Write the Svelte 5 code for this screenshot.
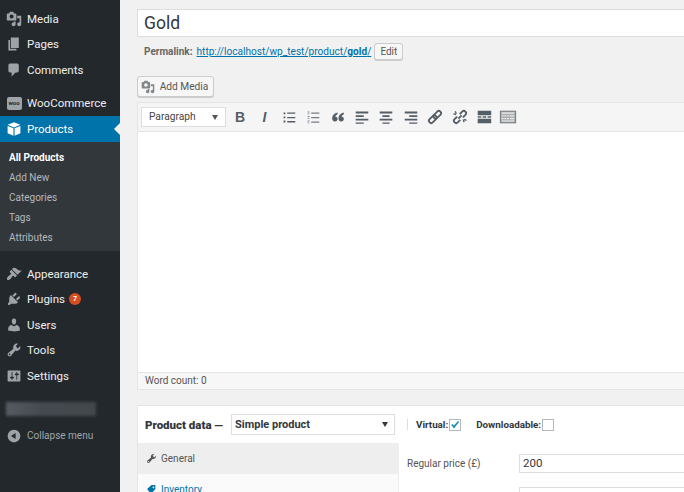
<script>
  const icons = {
    media: 'M13 11V4c0-.55-.45-1-1-1h-1.67L9 1H5L3.67 3H2c-.55 0-1 .45-1 1v7c0 .55.45 1 1 1h10c.55 0 1-.45 1-1zM7 4.5c1.38 0 2.5 1.12 2.5 2.5S8.38 9.5 7 9.5 4.5 8.38 4.5 7 5.62 4.5 7 4.5zM14 6h5v10.5c0 1.38-1.12 2.5-2.5 2.5S14 17.88 14 16.5s1.12-2.5 2.5-2.5c.17 0 .34.02.5.05V9h-3V6zm-4 8.05V13h2v3.5c0 1.38-1.12 2.5-2.5 2.5S7 17.88 7 16.5 8.12 14 9.5 14c.17 0 .34.02.5.05z',
    pages: 'M6 15V2h10v13H6zm-1 1h8v2H3V5h2v11z',
    comments: 'M5 2h9c1.1 0 2 .9 2 2v7c0 1.1-.9 2-2 2h-2l-5 5v-5H5c-1.1 0-2-.9-2-2V4c0-1.1.9-2 2-2z',
    appearance: 'M14.48 11.06L7.41 3.99l1.5-1.5c.5-.56 2.3-.47 3.51.32 1.21.8 1.43 1.28 2.91 2.1 1.18.64 2.45 1.26 4.45.85zm-.71.71L6.7 4.7 4.93 6.47c-.39.39-.39 1.02 0 1.41l1.06 1.06c.39.39.39 1.03 0 1.42-.6.6-1.43 1.11-2.21 1.69-.35.26-.7.53-1.01.84-1.34 1.34-2.05 3.47-1.27 4.25.78.78 2.91.07 4.25-1.27.31-.31.58-.66.84-1.01.58-.78 1.09-1.61 1.69-2.21.39-.39 1.03-.39 1.42 0l1.06 1.06c.39.39 1.02.39 1.41 0z',
    plugins: 'M13.11 4.36L9.87 7.6 8 5.73l3.24-3.24c.35-.34 1.05-.2 1.56.32.52.51.66 1.21.31 1.55zm-8 1.77l.91-1.12 9.01 9.01-1.19.84c-.71.71-2.63 1.16-3.82 1.16H6.14L4.9 17.26c-.59.59-1.54.59-2.12 0-.59-.58-.59-1.53 0-2.12l1.24-1.24v-3.88c0-1.13.4-3.19 1.09-3.89zm7.26 3.97l3.24-3.24c.34-.35 1.04-.21 1.55.31.52.51.66 1.21.31 1.55l-3.24 3.25z',
    users: 'M10 9.25c-2.27 0-2.73-3.44-2.73-3.44C7 4.02 7.82 2 9.97 2c2.16 0 2.98 2.02 2.71 3.81 0 0-.41 3.44-2.68 3.44zm0 2.57L12.72 10c2.39 0 4.52 2.33 4.52 4.53v2.49s-3.65 1.13-7.24 1.13c-3.65 0-7.24-1.13-7.24-1.13v-2.49c0-2.25 1.94-4.48 4.47-4.48z',
    tools: 'M16.68 9.77c-1.34 1.34-3.3 1.67-4.95.99l-5.41 6.52c-.99.99-2.59.99-3.58 0s-.99-2.59 0-3.57l6.52-5.42c-.68-1.65-.35-3.61.99-4.95 1.28-1.28 3.12-1.62 4.72-1.06l-2.89 2.89 2.82 2.82 2.86-2.87c.53 1.58.18 3.39-1.08 4.65zM3.81 16.21c.4.39 1.04.39 1.43 0 .4-.4.4-1.04 0-1.43-.39-.4-1.03-.4-1.43 0-.39.39-.39 1.03 0 1.43z',
    settings: 'M18 16V4c0-.55-.45-1-1-1H3c-.55 0-1 .45-1 1v12c0 .55.45 1 1 1h14c.55 0 1-.45 1-1zM8 11h1c.55 0 1 .45 1 1s-.45 1-1 1H8v1.5c0 .28-.22.5-.5.5s-.5-.22-.5-.5V13H6c-.55 0-1-.45-1-1s.45-1 1-1h1V5.5c0-.28.22-.5.5-.5s.5.22.5.5V11zm5-2h-1c-.55 0-1-.45-1-1s.45-1 1-1h1V5.5c0-.28.22-.5.5-.5s.5.22.5.5V7h1c.55 0 1 .45 1 1s-.45 1-1 1h-1v5.5c0 .28-.22.5-.5.5s-.5-.22-.5-.5V9z',
    products: 'M10 1.5l8 3.2-8 3.3-8-3.3zM2 6.2l7.3 3v9.3L2 15.2zM18 6.2v9l-7.3 3.3V9.2z',
    collapse: 'M10 2.16c4.33 0 7.84 3.51 7.84 7.84s-3.51 7.84-7.84 7.84S2.16 14.33 2.16 10 5.71 2.16 10 2.16zm2 11.72V6.12L6.18 9.97z'
  };

  const topItems = [
    { label: 'Media', icon: 'media' },
    { label: 'Pages', icon: 'pages' },
    { label: 'Comments', icon: 'comments' }
  ];
  const subItems = ['All Products', 'Add New', 'Categories', 'Tags', 'Attributes'];
  const lowerItems = [
    { label: 'Appearance', icon: 'appearance' },
    { label: 'Plugins', icon: 'plugins', badge: 7 },
    { label: 'Users', icon: 'users' },
    { label: 'Tools', icon: 'tools' },
    { label: 'Settings', icon: 'settings' }
  ];
</script>

<div class="page">
  <nav class="sidebar">
    {#each topItems as item}
      <div class="item">
        <svg class="icon" viewBox="0 0 20 20"><path d={icons[item.icon]} /></svg>
        <span>{item.label}</span>
      </div>
    {/each}
    <div class="item woo-item">
      <span class="woo-icon">woo</span>
      <span>WooCommerce</span>
    </div>
    <div class="item current">
      <svg class="icon" viewBox="0 0 20 20"><path d={icons.products} /></svg>
      <span>Products</span>
    </div>
    <div class="submenu">
      {#each subItems as sub, i}
        <div class="sub" class:active={i === 0}>{sub}</div>
      {/each}
    </div>
    {#each lowerItems as item}
      <div class="item">
        <svg class="icon" viewBox="0 0 20 20"><path d={icons[item.icon]} /></svg>
        <span>{item.label}</span>
        {#if item.badge}<span class="badge">{item.badge}</span>{/if}
      </div>
    {/each}
    <div class="blurred"></div>
    <div class="collapse">
      <svg class="icon" viewBox="0 0 20 20"><path d={icons.collapse} /></svg>
      <span>Collapse menu</span>
    </div>
  </nav>

  <main class="content">
    <div class="title">Gold</div>
    <div class="permalink">
      <strong>Permalink:</strong>
      <a href="#top">http://localhost/wp_test/product/<b>gold</b>/</a>
      <span class="btn edit">Edit</span>
    </div>

    <span class="btn add-media">
      <svg viewBox="0 0 20 20"><path d={icons.media} /></svg>
      Add Media
    </span>

    <section class="editor">
      <div class="toolbar">
        <div class="format">Paragraph<i class="caret"></i></div>
        <div class="tools">
          <span class="tool glyph">B</span>
          <span class="tool glyph italic">I</span>
          <svg class="tool" viewBox="0 0 20 20"><path d="M4 5h2v2H4zM8 5h9v1.5H8zM4 9.5h2v2H4zM8 10h9v1.5H8zM4 14h2v2H4zM8 14.5h9V16H8z" /></svg>
          <svg class="tool light" viewBox="0 0 20 20"><path d="M4 4h2v1H4zM4 6h2v1H4zM4 9h2v1H4zM4 11h2v1H4zM4 14h2v1H4zM4 16h2v1H4zM8 5h9v1.5H8zM8 10h9v1.5H8zM8 15h9v1.5H8z" /></svg>
          <svg class="tool" viewBox="0 0 20 20"><path d="M9.5 5C6 6 3.5 8 3.5 11.500c0 2 1.200 3.500 3 3.500s3-1.200 3-2.800-1.200-2.700-2.700-2.700c.4-1 1.500-2 2.700-2.600zM16.500 5c-3.500 1-6 3-6 6.500 0 2 1.200 3.500 3 3.500s3-1.200 3-2.800-1.200-2.700-2.700-2.700c.4-1 1.500-2 2.700-2.600z" /></svg>
          <svg class="tool" viewBox="0 0 20 20"><path d="M3 4h14v2H3zM3 8h9v2H3zM3 12h14v2H3zM3 16h9v1.500H3z" /></svg>
          <svg class="tool" viewBox="0 0 20 20"><path d="M3 4h14v2H3zM6 8h8v2H6zM3 12h14v2H3zM6 16h8v1.500H6z" /></svg>
          <svg class="tool" viewBox="0 0 20 20"><path d="M3 4h14v2H3zM8 8h9v2H8zM3 12h14v2H3zM8 16h9v1.500H8z" /></svg>
          <svg class="tool" viewBox="0 0 20 20">
            <g class="chain" transform="rotate(-45 10 10)">
              <rect x="1.500" y="7.500" width="10" height="5" rx="2.500" />
              <rect x="8.500" y="7.500" width="10" height="5" rx="2.500" />
            </g>
          </svg>
          <svg class="tool" viewBox="0 0 20 20">
            <g class="chain" transform="rotate(-45 10 10)">
              <path d="M8 7.500H4a2.500 2.500 0 0 0 0 5h4M12 7.500h4a2.500 2.500 0 0 1 0 5h-4M7.500 10h5" />
            </g>
            <path d="M4 4l1.400-.8 1.200 2.800-1.400.7zM2.500 7l.5-1.400 2.800 1-.5 1.400zM14 16l1.400-.8-1.200-2.800-1.400.7zM17.500 13l-.5 1.400-2.800-1 .5-1.400z" />
          </svg>
          <svg class="tool" viewBox="0 0 20 20"><path d="M3 3h15v5H3zM3 9.300h4v1.400H3zM8.500 9.300h4v1.400h-4zM14 9.300h4v1.400h-4zM3 12h15v5H3z" /></svg>
          <svg class="tool" viewBox="0 0 20 20"><rect x="1.500" y="3.500" width="17" height="13" fill="#a8acb0" stroke="#6b7176" /><path fill="#f0f0f0" d="M3 5h14v1.500H3zM3 8h2v1.500H3zM6 8h2v1.500H6zM9 8h2v1.500H9zM12 8h5v1.500h-5zM3 11h2v1.500H3zM6 11h2v1.500H6zM9 11h2v1.500H9zM12 11h5v1.500h-5zM3 14h14v1H3z" /></svg>
        </div>
      </div>
      <div class="writing"></div>
      <div class="status">Word count: 0</div>
    </section>

    <section class="product-data">
      <header>
        <strong class="heading">Product data —</strong>
        <div class="type-select">Simple product<i class="caret dark"></i></div>
        <span class="divider"></span>
        <label for="virtual">Virtual:</label>
        <span id="virtual" class="check">
          <svg viewBox="0 0 16 16"><path d="M3 8l1.600-1.500 2 2.200L12 2.500l1.600 1.200L6.700 12.500z" /></svg>
        </span>
        <label for="downloadable" class="second">Downloadable:</label>
        <span id="downloadable" class="check"></span>
      </header>
      <div class="panels">
        <div class="tabs">
          <div class="tab selected">
            <svg viewBox="0 0 20 20"><path d={icons.tools} /></svg>
            General
          </div>
          <div class="tab link">
            <svg viewBox="0 0 20 20"><path d="M2 9l8-7h7v7l-8 9zM13.500 4.500a1.500 1.500 0 1 0 .01 0z" fill-rule="evenodd" /></svg>
            Inventory
          </div>
        </div>
        <div class="fields">
          <div class="field">
            <span>Regular price (£)</span>
            <div class="input">200</div>
          </div>
          <div class="field">
            <span></span>
            <div class="input"></div>
          </div>
        </div>
      </div>
    </section>
  </main>
</div>

<style>
  :global(body) {
    margin: 0;
    overflow: hidden;
    background: #f1f1f1;
  }

  .page {
    display: flex;
    height: 492px;
    overflow: hidden;
    font-family: Roboto, "Noto Sans", sans-serif;
    font-size: 11px;
    color: #444;
  }

  .sidebar {
    flex: 0 0 120px;
    box-sizing: border-box;
    padding-top: 6px;
    background: #23282d;
    color: #eee;
  }

  .item {
    display: flex;
    align-items: center;
    position: relative;
    height: 25.500px;
    padding-left: 6px;
    font-size: 11.500px;
    gap: 5px;
  }

  .icon {
    width: 16px;
    height: 16px;
    fill: #9ea3a8;
    flex: none;
  }

  .woo-item {
    margin-top: 8px;
  }

  .woo-icon {
    box-sizing: border-box;
    width: 15px;
    height: 13px;
    margin-left: 0.500px;
    margin-right: 0.500px;
    border-radius: 2px;
    background: #9ea3a8;
    color: #23282d;
    font-size: 6px;
    font-weight: 700;
    line-height: 12px;
    text-align: center;
  }

  .current {
    background: #0073aa;
    color: #fff;
    height: 26px;
  }

  .current .icon {
    fill: #fff;
  }

  .current::after {
    content: "";
    position: absolute;
    right: 0;
    top: 7px;
    border: 6px solid transparent;
    border-right-color: #f1f1f1;
    border-left-width: 0;
  }

  .submenu {
    box-sizing: border-box;
    height: 109px;
    padding-top: 6px;
    margin-bottom: 10px;
    background: #32373c;
    color: #b4b9be;
  }

  .sub {
    height: 20px;
    line-height: 20px;
    padding-left: 9px;
    font-size: 10px;
  }

  .sub.active {
    color: #fff;
    font-weight: 700;
  }

  .badge {
    width: 12px;
    height: 12px;
    margin-left: -1px;
    border-radius: 50%;
    background: #d54e21;
    color: #fff;
    font-size: 7px;
    font-weight: 700;
    line-height: 12px;
    text-align: center;
  }

  .blurred {
    width: 90px;
    height: 14px;
    margin: 13px 0 0 6px;
    background: linear-gradient(90deg, #555b62, #454a50 40%, #43484d);
    filter: blur(1.500px);
  }

  .collapse {
    display: flex;
    align-items: center;
    gap: 5px;
    margin-top: 12px;
    padding-left: 6px;
    color: #a0a5aa;
    font-size: 10px;
  }

  .content {
    flex: 1;
    min-width: 0;
    overflow: hidden;
    padding: 9px 0 0 17px;
  }

  .title {
    box-sizing: border-box;
    width: 560px;
    height: 28px;
    padding-left: 6px;
    border: 1px solid #ddd;
    background: #fff;
    color: #32373c;
    font-size: 17.500px;
    line-height: 26px;
  }

  .permalink {
    display: flex;
    align-items: center;
    height: 18px;
    margin-top: 5px;
    padding-left: 7px;
    gap: 3px;
    font-size: 10px;
    color: #666;
    white-space: nowrap;
  }

  .permalink strong {
    margin-right: 1px;
  }

  .permalink a {
    color: #0073aa;
    font-size: 10.100px;
  }

  .btn {
    box-sizing: border-box;
    display: inline-flex;
    align-items: center;
    justify-content: center;
    border: 1px solid #ccc;
    border-radius: 3px;
    background: #f7f7f7;
    box-shadow: 0 1px 0 #ccc;
    color: #555;
  }

  .edit {
    width: 29px;
    height: 17px;
    font-size: 10px;
  }

  .add-media {
    width: 77px;
    height: 21px;
    margin-top: 16px;
    padding-right: 2px;
    gap: 5px;
    font-size: 10.200px;
  }

  .add-media svg {
    width: 14px;
    height: 14px;
    fill: #82878c;
  }

  .editor {
    width: 560px;
    margin-top: 5px;
    border: 1px solid #e5e5e5;
    background: #fff;
  }

  .toolbar {
    display: flex;
    align-items: center;
    height: 28px;
    padding-left: 3px;
    background: #f5f5f5;
    border-bottom: 1px solid #e5e5e5;
  }

  .format {
    box-sizing: border-box;
    position: relative;
    width: 85px;
    height: 20px;
    padding-left: 7px;
    border: 1px solid #ddd;
    background: #fff;
    color: #444;
    font-size: 10.200px;
    line-height: 18px;
  }

  .caret {
    position: absolute;
    right: 7px;
    top: 7px;
    border: 3.500px solid transparent;
    border-top: 5px solid #555;
    border-bottom-width: 0;
  }

  .tools {
    display: flex;
    align-items: center;
    gap: 6.400px;
    margin-left: 5px;
  }

  .tool {
    width: 18px;
    height: 18px;
    fill: #555d66;
    text-align: center;
    flex: none;
  }

  .tool.light {
    fill: #777d84;
  }

  .chain {
    fill: none;
    stroke: #555d66;
    stroke-width: 2;
  }

  .glyph {
    font-size: 14px;
    line-height: 18px;
    color: #555d66;
    font-weight: 700;
    font-family: "Liberation Sans", sans-serif;
  }

  .italic {
    font-style: italic;
  }

  .writing {
    height: 240px;
    background: #fff;
  }

  .status {
    box-sizing: border-box;
    height: 17px;
    padding-left: 7px;
    border-top: 1px solid #e5e5e5;
    background: #f7f7f7;
    color: #555;
    font-size: 10px;
    line-height: 15px;
  }

  .product-data {
    width: 560px;
    margin-top: 15px;
    border: 1px solid #e5e5e5;
    background: #fff;
  }

  header {
    display: flex;
    align-items: center;
    height: 37px;
    padding-left: 7px;
    color: #32373c;
    font-size: 9.800px;
    font-weight: 700;
  }

  .heading {
    flex: 0 0 86px;
    font-size: 11.500px;
  }

  .type-select {
    box-sizing: border-box;
    position: relative;
    width: 164px;
    height: 21px;
    padding-left: 3px;
    border: 1px solid #ddd;
    font-size: 11px;
    line-height: 20px;
  }

  .caret.dark {
    right: 6px;
    top: 7px;
    border-top-color: #32373c;
  }

  .divider {
    width: 1px;
    height: 11px;
    margin: 0 8px 0 12px;
    background: #ddd;
  }

  .check {
    box-sizing: border-box;
    display: inline-block;
    width: 12px;
    height: 12px;
    margin-left: 1px;
    border: 1px solid #b4b9be;
    background: #fff;
  }

  .check svg {
    display: block;
    width: 12px;
    height: 12px;
    margin: -1px 0 0 -1px;
    fill: #1e8cbe;
  }

  .second {
    margin-left: 15px;
  }

  .panels {
    display: flex;
    height: 60px;
  }

  .tabs {
    flex: 0 0 260px;
    background: #fafafa;
    border-right: 1px solid #eee;
  }

  .tab {
    display: flex;
    align-items: center;
    gap: 4px;
    height: 31px;
    padding-left: 8px;
    font-size: 10px;
    color: #555;
  }

  .tab svg {
    width: 11px;
    height: 11px;
    fill: #555;
  }

  .tab.selected {
    background: #eee;
  }

  .tab.link {
    color: #0073aa;
    height: 30px;
  }

  .tab.link svg {
    fill: #0073aa;
  }

  .fields {
    flex: 1;
    padding: 10px 0 0 8px;
  }

  .field {
    display: flex;
    align-items: center;
    height: 20px;
    margin-bottom: 13px;
    font-size: 10px;
    color: #555;
  }

  .field span {
    width: 112px;
  }

  .input {
    box-sizing: border-box;
    flex: 1;
    height: 19px;
    padding-left: 3px;
    border: 1px solid #ddd;
    color: #32373c;
    font-size: 11.500px;
    line-height: 17px;
  }
</style>
